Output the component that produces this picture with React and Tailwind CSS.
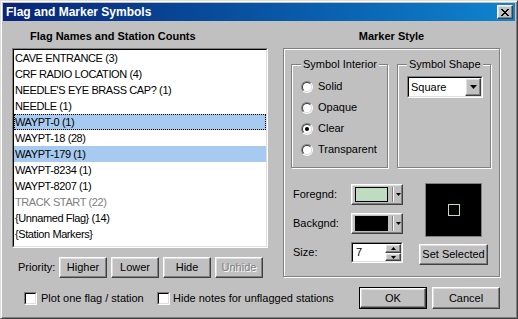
import React from "react";

const raised =
  "bg-[#c0c0c0] border border-t-white border-l-white border-r-[#404040] border-b-[#404040] shadow-[inset_-1px_-1px_0_#808080,inset_1px_1px_0_#dfdfdf]";
const etched =
  "border border-[#808080] shadow-[inset_1px_1px_0_#fff,1px_1px_0_#fff]";

function Sunken({ className = "", innerClass = "", children }) {
  return (
    <div className={`border border-t-[#808080] border-l-[#808080] border-r-white border-b-white ${className}`}>
      <div className={`h-full w-full border border-t-black border-l-black border-r-[#dfdfdf] border-b-[#dfdfdf] bg-white ${innerClass}`}>
        {children}
      </div>
    </div>
  );
}

function CloseGlyph() {
  const rows = ["XX....XX", ".XX..XX.", "..XXXX..", "...XX...", "..XXXX..", ".XX..XX.", "XX....XX"];
  const rects = [];
  rows.forEach((r, y) =>
    r.split("").forEach((c, x) => {
      if (c === "X") rects.push(<rect key={`${x}-${y}`} x={x} y={y} width="1" height="1" fill="black" />);
    })
  );
  return (
    <svg width="8" height="7" viewBox="0 0 8 7" shapeRendering="crispEdges">
      {rects}
    </svg>
  );
}

function DownTri({ w = 7, h = 4 }) {
  return (
    <svg width={w} height={h} viewBox={`0 0 ${w} ${h}`}>
      <path d={`M0 0H${w}L${w / 2} ${h}Z`} fill="black" />
    </svg>
  );
}
function UpTri({ w = 5, h = 3 }) {
  return (
    <svg width={w} height={h} viewBox={`0 0 ${w} ${h}`}>
      <path d={`M0 ${h}H${w}L${w / 2} 0Z`} fill="black" />
    </svg>
  );
}

function Radio({ checked, label }) {
  return (
    <div className="flex h-[21px] items-center gap-[5px]">
      <div className="h-[12px] w-[12px] rounded-full border border-t-[#808080] border-l-[#808080] border-r-white border-b-white">
        <div className="flex h-full w-full items-center justify-center rounded-full border border-t-[#404040] border-l-[#404040] border-r-[#dfdfdf] border-b-[#dfdfdf] bg-white">
          {checked && <div className="h-[4px] w-[4px] rounded-full bg-black" />}
        </div>
      </div>
      <span>{label}</span>
    </div>
  );
}

function Checkbox() {
  return <Sunken className="h-[13px] w-[13px] shrink-0" />;
}

function Btn({ children, className = "", disabled }) {
  return (
    <div className={`${raised} flex items-center justify-center ${className}`}>
      <span className={disabled ? "text-[#808080] [text-shadow:1px_1px_0_#fff]" : ""}>{children}</span>
    </div>
  );
}

function ColorBtn({ color }) {
  return (
    <div className={`${raised} flex h-[21px] w-[52px] items-center pl-[3px]`}>
      <div className="h-[15px] w-[33px] border border-black" style={{ background: color }} />
      <div className="ml-[4px] h-[15px] w-[2px] border-l border-l-[#808080] border-r border-r-white" />
      <div className="ml-[2px] flex items-center">
        <DownTri w={5} h={3} />
      </div>
    </div>
  );
}

const items = [
  { t: "CAVE ENTRANCE (3)" },
  { t: "CRF RADIO LOCATION (4)" },
  { t: "NEEDLE'S EYE BRASS CAP? (1)" },
  { t: "NEEDLE (1)" },
  { t: "WAYPT-0 (1)", sel: true, focus: true },
  { t: "WAYPT-18 (28)" },
  { t: "WAYPT-179 (1)", sel: true },
  { t: "WAYPT-8234 (1)" },
  { t: "WAYPT-8207 (1)" },
  { t: "TRACK START (22)", dis: true },
  { t: "{Unnamed Flag} (14)" },
  { t: "{Station Markers}" },
];

export default function App() {
  return (
    <div className="h-[319px] w-[518px] overflow-hidden border border-t-[#dfdfdf] border-l-[#dfdfdf] border-r-[#404040] border-b-[#404040] bg-[#c0c0c0] p-[2px] font-['Liberation_Sans',Arial,sans-serif] text-[11px] leading-[13px] text-black shadow-[inset_1px_1px_0_#fff,inset_-1px_-1px_0_#808080]">
      {/* Title bar */}
      <div className="flex h-[18px] items-center bg-linear-to-r from-[#0a2478] to-[#1084d0] pl-[3px]">
        <span className="text-[12px] font-bold text-white">Flag and Marker Symbols</span>
        <div className={`${raised} ml-auto mr-[2px] flex h-[14px] w-[16px] items-center justify-center`}>
          <CloseGlyph />
        </div>
      </div>

      {/* Body */}
      <div className="pl-[9px] pt-[9px]">
        <div className="flex gap-[15px]">
          {/* Left column */}
          <div className="w-[256px]">
            <div className="h-[13px] pl-[18px] font-bold">Flag Names and Station Counts</div>
            <Sunken className="mt-[5px] h-[200px] w-[256px]">
              {items.map((it) => (
                <div
                  key={it.t}
                  className={`h-[16px] whitespace-nowrap pl-[1px] leading-[16px] tracking-[-0.4px] ${
                    it.sel ? "bg-[#a6caf0]" : ""
                  } ${it.focus ? "outline-1 -outline-offset-1 outline-dotted outline-black" : ""} ${
                    it.dis ? "text-[#808080]" : ""
                  }`}
                >
                  {it.t}
                </div>
              ))}
            </Sunken>
            <div className="mt-[9px] flex h-[21px] items-center">
              <span className="ml-[6px] w-[41px]">Priority:</span>
              <div className="flex gap-[4px]">
                <Btn className="h-[21px] w-[48px]">Higher</Btn>
                <Btn className="h-[21px] w-[48px]">Lower</Btn>
                <Btn className="h-[21px] w-[48px]">Hide</Btn>
                <Btn className="h-[21px] w-[48px]" disabled>
                  Unhide
                </Btn>
              </div>
            </div>
          </div>

          {/* Right column */}
          <div className="w-[217px]">
            <div className="h-[13px] text-center font-bold">Marker Style</div>
            <div className={`${etched} mt-[5px] h-[229px] w-[217px] pl-[7px] pt-[9px]`}>
              <div className="flex gap-[9px]">
                <fieldset className={`${etched} m-0 h-[110px] w-[97px] p-0 pl-[9px] pt-[5px]`}>
                  <legend className="bg-[#c0c0c0] px-[2px] leading-[13px]">Symbol Interior</legend>
                  <Radio label="Solid" />
                  <Radio label="Opaque" />
                  <Radio label="Clear" checked />
                  <Radio label="Transparent" />
                </fieldset>
                <fieldset className={`${etched} m-0 h-[110px] w-[94px] p-0 pl-[9px] pt-[5px]`}>
                  <legend className="bg-[#c0c0c0] px-[2px] leading-[13px]">Symbol Shape</legend>
                  <Sunken className="h-[22px] w-[76px]" innerClass="flex items-center">
                    <span className="pl-[2px]">Square</span>
                    <div className={`${raised} ml-auto flex h-[18px] w-[16px] items-center justify-center`}>
                      <DownTri />
                    </div>
                  </Sunken>
                </fieldset>
              </div>

              <div className="ml-[2px] mt-[15px] flex gap-[16px]">
                <div className="flex flex-col gap-[8px] pt-[1px]">
                  <div className="flex h-[21px] items-center">
                    <span className="w-[58px]">Foregnd:</span>
                    <ColorBtn color="#c0dcc0" />
                  </div>
                  <div className="flex h-[21px] items-center">
                    <span className="w-[58px]">Backgnd:</span>
                    <ColorBtn color="#000000" />
                  </div>
                  <div className="flex h-[21px] items-center">
                    <span className="w-[58px]">Size:</span>
                    <Sunken className="h-[21px] w-[52px]" innerClass="flex items-center">
                      <span className="pl-[3px]">7</span>
                      <div className="ml-auto flex h-full flex-col">
                        <div className={`${raised} flex h-[9px] w-[16px] items-center justify-center`}>
                          <UpTri />
                        </div>
                        <div className={`${raised} flex h-[8px] w-[16px] items-center justify-center`}>
                          <DownTri w={5} h={3} />
                        </div>
                      </div>
                    </Sunken>
                  </div>
                </div>
                <div className="flex w-[69px] flex-col items-center">
                  <div className="flex h-[54px] w-[57px] items-center justify-center border border-[#808080] bg-black">
                    <div className="h-[12px] w-[12px] border border-[#c0dcc0]" />
                  </div>
                  <Btn className="mt-[7px] h-[21px] w-[69px]">Set Selected</Btn>
                </div>
              </div>
            </div>
          </div>
        </div>

        {/* Bottom row */}
        <div className="mt-[9px] flex h-[22px] w-[488px] items-center">
          <div className="ml-[12px] flex w-[133px] items-center">
            <Checkbox />
            <span className="ml-[4px]">Plot one flag / station</span>
          </div>
          <div className="flex items-center">
            <Checkbox />
            <span className="ml-[3px]">Hide notes for unflagged stations</span>
          </div>
          <div className="ml-auto flex h-[22px] w-[68px] border border-black">
            <Btn className="h-full w-full">OK</Btn>
          </div>
          <Btn className="ml-[5px] h-[22px] w-[68px]">Cancel</Btn>
        </div>
      </div>
    </div>
  );
}
